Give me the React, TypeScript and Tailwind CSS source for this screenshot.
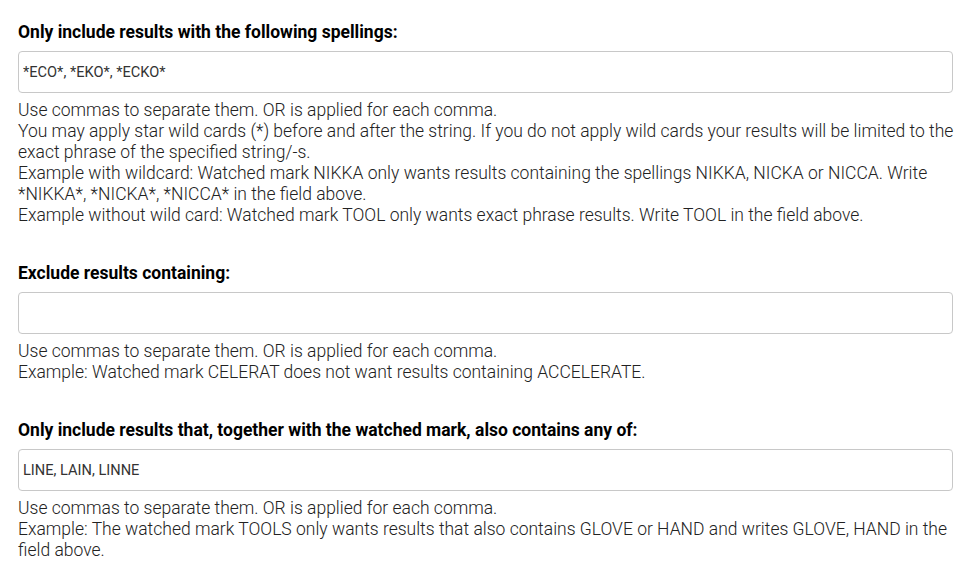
import React from "react";

interface FilterFieldProps {
  label: string;
  value: string;
  help: React.ReactNode;
}

function FilterField({ label, value, help }: FilterFieldProps) {
  return (
    <div className="flex flex-col">
      <label className="text-[17.5px] leading-[22px] font-bold text-black">{label}</label>
      <input
        type="text"
        defaultValue={value}
        className="mt-2 h-[42px] w-full rounded border border-[#c8c8c8] bg-white px-[4px] text-[14.6px] font-normal text-[#333] outline-none"
      />
      <div className="-mr-[8px] mt-[7px] text-[17.5px] leading-[21px] font-light text-[#222]">{help}</div>
    </div>
  );
}

export default function App() {
  return (
    <div className="min-h-screen bg-white" style={{ fontFamily: "Roboto, 'Liberation Sans', sans-serif" }}>
      <div className="flex w-[960px] flex-col gap-[36px] pt-[21px] pl-[18px] pr-[7px]">
        <FilterField
          label="Only include results with the following spellings:"
          value="*ECO*, *EKO*, *ECKO*"
          help={
            <>
              <p>Use commas to separate them. OR is applied for each comma.</p>
              <p>
                You may apply star wild cards (*) before and after the string. If you do not apply wild cards your results will be limited to the exact phrase of the specified string/-s.
              </p>
              <p>
                Example with wildcard: Watched mark NIKKA only wants results containing the spellings NIKKA, NICKA or NICCA. Write *NIKKA*, *NICKA*, *NICCA* in the field above.
              </p>
              <p>Example without wild card: Watched mark TOOL only wants exact phrase results. Write TOOL in the field above.</p>
            </>
          }
        />
        <FilterField
          label="Exclude results containing:"
          value=""
          help={
            <>
              <p>Use commas to separate them. OR is applied for each comma.</p>
              <p>Example: Watched mark CELERAT does not want results containing ACCELERATE.</p>
            </>
          }
        />
        <FilterField
          label="Only include results that, together with the watched mark, also contains any of:"
          value="LINE, LAIN, LINNE"
          help={
            <>
              <p>Use commas to separate them. OR is applied for each comma.</p>
              <p>
                Example: The watched mark TOOLS only wants results that also contains GLOVE or HAND and writes GLOVE, HAND in the field above.
              </p>
            </>
          }
        />
      </div>
    </div>
  );
}
